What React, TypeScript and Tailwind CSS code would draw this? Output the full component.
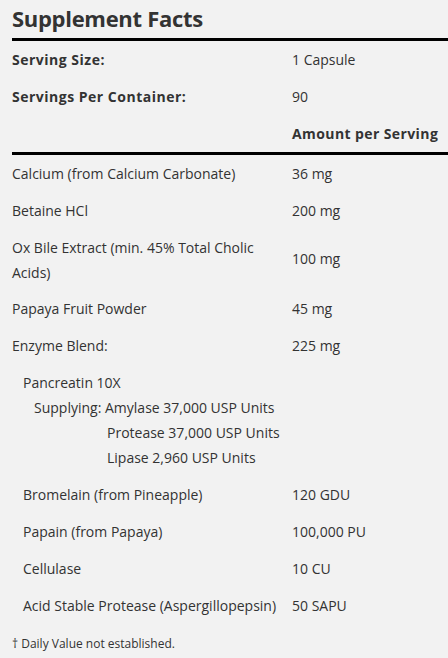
import React from "react";

const font = { fontFamily: "'Open Sans', Lato, sans-serif" };

function Row({ label, value, indent = "" }: { label: React.ReactNode; value: string; indent?: string }) {
  return (
    <div className="flex py-[6px] leading-[25px] text-[14px]">
      <div className={`w-[280px] shrink-0 ${indent}`}>{label}</div>
      <div className="flex items-center">{value}</div>
    </div>
  );
}

export default function App() {
  return (
    <div className="min-h-[658px] w-[448px] overflow-hidden bg-[#f2f2f2] text-[#333333]" style={font}>
      <div className="pl-3">
        <h2 className="pt-[4px] pb-[6px] text-[22px] font-bold leading-[28px] text-[#333333] tracking-[-0.3px]">Supplement Facts</h2>
        <div className="border-t-[3px] border-black">
          <div className="flex py-[6px] leading-[25px] text-[14px]">
            <div className="w-[280px] shrink-0 font-bold tracking-[0.5px]">Serving Size:</div>
            <div>1 Capsule</div>
          </div>
          <div className="flex py-[6px] leading-[25px] text-[14px]">
            <div className="w-[280px] shrink-0 font-bold tracking-[0.5px]">Servings Per Container:</div>
            <div>90</div>
          </div>
          <div className="flex py-[6px] leading-[25px] text-[14px]">
            <div className="w-[280px] shrink-0"></div>
            <div className="whitespace-nowrap font-bold tracking-[0.4px]">Amount per Serving</div>
          </div>
        </div>
        <div className="border-t-[3px] border-black">
          <Row label="Calcium (from Calcium Carbonate)" value="36 mg" />
          <Row label="Betaine HCl" value="200 mg" />
          <div className="flex pt-[6px] pb-[5px] leading-[25px] text-[14px]">
            <div className="w-[280px] shrink-0">
              <span className="block w-[260px]">Ox Bile Extract (min. 45% Total Cholic Acids)</span>
            </div>
            <div className="flex items-center pb-[4px]">100 mg</div>
          </div>
          <Row label="Papaya Fruit Powder" value="45 mg" />
          <Row label="Enzyme Blend:" value="225 mg" />
          <div className="flex py-[6px] leading-[25px] text-[14px]">
            <div className="pl-[11px]">
              <div>Pancreatin 10X</div>
              <div className="flex pl-[11px]">
                <span className="w-[71px]">Supplying:</span>
                <div>
                  <div>Amylase 37,000 USP Units</div>
                  <div className="pl-[2px]">Protease 37,000 USP Units</div>
                  <div className="pl-[2px]">Lipase 2,960 USP Units</div>
                </div>
              </div>
            </div>
          </div>
          <Row indent="pl-[11px]" label="Bromelain (from Pineapple)" value="120 GDU" />
          <Row indent="pl-[11px]" label="Papain (from Papaya)" value="100,000 PU" />
          <Row indent="pl-[11px]" label="Cellulase" value="10 CU" />
          <Row indent="pl-[11px]" label="Acid Stable Protease (Aspergillopepsin)" value="50 SAPU" />
        </div>
        <p className="pt-[10px] text-[12px] leading-[20px]">† Daily Value not established.</p>
      </div>
    </div>
  );
}
